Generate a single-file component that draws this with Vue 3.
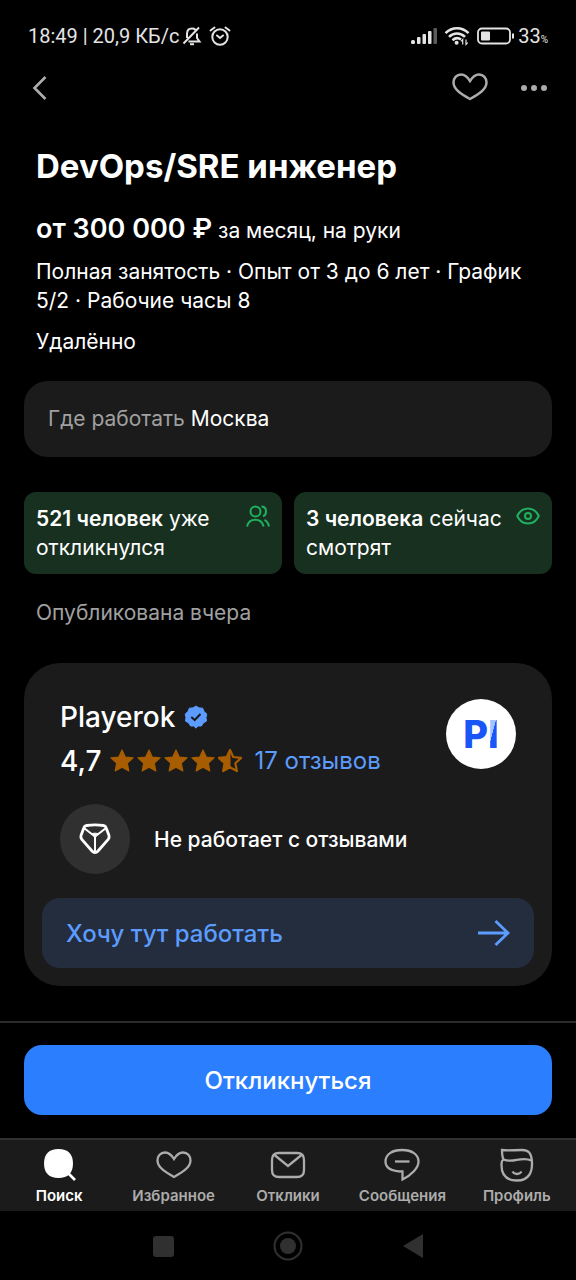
<script setup>
const heart =
  'M18 29C10 24.500 1.500 19.500 1.500 12.500C1.500 8 4.500 4.500 9 4.500C13 4.500 15.500 7 18 11C20.500 7 23 4.500 27 4.500C31.500 4.500 34.500 8 34.500 12.500C34.500 19.500 26 24.500 18 29Z'
const star =
  'M12 1.800L15 8.300L22.200 9.100L16.900 14L18.300 21.200L12 17.700L5.700 21.200L7.100 14L1.800 9.100L9 8.300Z'

const tabs = [
  { id: 'search', label: 'Поиск', active: true },
  { id: 'favorites', label: 'Избранное' },
  { id: 'responses', label: 'Отклики' },
  { id: 'messages', label: 'Сообщения' },
  { id: 'profile', label: 'Профиль' },
]
</script>

<template>
  <div class="app">
    <div class="status">
      <div class="status-group">
        <span class="clock">18:49 | 20,9 КБ/с</span>
        <svg class="bell" width="20" height="20" viewBox="0 0 20 20" fill="none" stroke="currentColor" stroke-width="2">
          <path d="M1.500 17.500L17 1.500M5 12V8C5 4.500 7 2.600 10 2.600C11.500 2.600 12.600 3 13.400 3.800M15 7.500V12L17.500 15.500H6.500" />
          <path d="M8 18.200H12" />
        </svg>
        <svg width="22" height="20" viewBox="0 0 22 20" fill="none" stroke="currentColor" stroke-width="2" stroke-linecap="round">
          <circle cx="11" cy="11" r="7.700" />
          <path d="M8 9.500L11 12L14 9.500M1.500 4.500L5.500 1.500M20.500 4.500L16.500 1.500" />
        </svg>
      </div>
      <div class="status-group">
        <svg width="26" height="18" viewBox="0 0 26 18" fill="currentColor">
          <rect x="0" y="13" width="4" height="4" rx="1.500" />
          <rect x="6" y="10" width="3.500" height="7" rx="1" />
          <rect x="11.500" y="7" width="3.500" height="10" rx="1" />
          <rect x="17" y="4" width="3.500" height="13" rx="1" />
          <rect x="22.500" y="1" width="3.500" height="16" rx="1" opacity=".4" />
        </svg>
        <svg width="26" height="20" viewBox="0 0 26 20" fill="none" stroke="currentColor" stroke-width="2.600">
          <path d="M1.500 7.200C8 .6 18 .6 24.500 7.200M5 10.900C9.700 6.400 16.300 6.400 21 10.900M8.500 14.300C11 12 14.500 11.800 17 13.500" />
          <circle cx="12.600" cy="16.700" r="2" fill="currentColor" stroke="none" />
          <path d="M18.700 18.500V13.500L17 15.300M22 13.500V18.500L23.700 16.700" stroke-width="1.200" />
        </svg>
        <svg width="38" height="18" viewBox="0 0 38 18" fill="none" stroke="currentColor">
          <rect x="1" y="1.500" width="32" height="15" rx="4" stroke-width="1.800" />
          <rect x="4" y="4.500" width="9" height="9" rx="1" fill="currentColor" stroke="none" />
          <path d="M36 6.500V11.500" stroke-width="2" />
        </svg>
        <span class="charge">33<small>%</small></span>
      </div>
    </div>

    <header class="toolbar">
      <button class="icon-btn" aria-label="Назад">
        <svg width="16" height="26" viewBox="0 0 16 26" fill="none" stroke="currentColor" stroke-width="2.600">
          <path d="M13.500 2L2.500 13L13.500 24" />
        </svg>
      </button>
      <div class="toolbar-actions">
        <button class="icon-btn" aria-label="В избранное">
          <svg width="36" height="32" viewBox="0 2 36 32" fill="none" stroke="currentColor" stroke-width="2.500">
            <path :d="heart" />
          </svg>
        </button>
        <button class="icon-btn" aria-label="Ещё">
          <svg width="28" height="8" viewBox="0 0 28 8" fill="currentColor">
            <circle cx="4" cy="4" r="3" />
            <circle cx="14" cy="4" r="3" />
            <circle cx="24" cy="4" r="3" />
          </svg>
        </button>
      </div>
    </header>

    <main class="content">
      <section class="summary">
        <h1>DevOps/SRE инженер</h1>
        <p class="salary"><strong>от 300 000 ₽</strong> за месяц, на руки</p>
        <p>Полная занятость · Опыт от 3 до 6 лет · График 5/2 · Рабочие часы 8</p>
        <p>Удалённо</p>
      </section>

      <section class="place"><span>Где работать</span> Москва</section>

      <section class="stats">
        <div class="stat">
          <p><strong>521 человек</strong> уже откликнулся</p>
          <svg width="24" height="24" viewBox="0 0 24 24" fill="none" stroke="currentColor" stroke-width="2">
            <circle cx="9.500" cy="7.500" r="5" />
            <path d="M1 22.500C2.200 17.800 5.200 15.800 9.300 15.800C13.400 15.800 16.400 17.800 17.600 22.500M15.500 2.500C18.600 2.600 20 4.700 20 7.500C20 9.800 19 11.600 17 12.300M18.500 15.800C21 17 22.300 19 23 22.500" />
          </svg>
        </div>
        <div class="stat">
          <p><strong>3 человека</strong> сейчас смотрят</p>
          <svg width="24" height="24" viewBox="0 0 24 24" fill="none" stroke="currentColor" stroke-width="2">
            <path d="M1.200 12C3.500 7.200 7.500 4.500 12 4.500S20.500 7.200 22.800 12C20.500 16.800 16.500 19.500 12 19.500S3.500 16.800 1.200 12Z" />
            <circle cx="12" cy="12" r="3" />
          </svg>
        </div>
      </section>

      <p class="published">Опубликована вчера</p>

      <section class="company">
        <div class="company-head">
          <div class="company-info">
            <div class="company-name">
              <h2>Playerok</h2>
              <svg width="24" height="24" viewBox="0 0 24 24">
                <path d="M12 1L15 2.900L18.700 3.200L20 6.600L22.800 9L22 12.500L22.500 16.100L19.300 17.900L17.400 21L13.800 21L12 23.200L9.800 21L6.600 21L4.700 17.900L1.500 16.100L2 12.500L1.200 9L4 6.600L5.300 3.200L9 2.900Z" fill="#5c9cff" stroke="#5c9cff" stroke-linejoin="round" />
                <path d="M7.300 12L10.700 15L16.500 9" fill="none" stroke="#1b1b1b" stroke-width="2" />
              </svg>
            </div>
            <div class="rating">
              <span>4,7</span>
              <div class="stars">
                <svg v-for="n in 4" :key="n" width="24" height="24" viewBox="1 1 22 22">
                  <path :d="star" />
                </svg>
                <svg width="24" height="24" viewBox="1 1 22 22">
                  <path :d="star" class="star-outline" />
                  <path d="M12 1.800V17.700L5.700 21.200L7.100 14L1.800 9.100L9 8.300Z" />
                </svg>
              </div>
              <a href="#reviews">17 отзывов</a>
            </div>
          </div>
          <div class="logo"><b>P</b><b class="logo-bar">I</b></div>
        </div>

        <div class="perk">
          <span class="perk-icon">
            <svg width="36" height="36" viewBox="0 0 36 36" fill="none" stroke="currentColor" stroke-width="2.800" stroke-linejoin="round">
              <path d="M7 6.500C7.500 5 8 4.700 9.500 4.500C15 3.600 21 3.600 26.500 4.500C28 4.700 28.500 5 29 6.500L32 14.500C32.400 16 32.200 17 31.200 18.300L21 30C19 32.200 17 32.200 15 30L4.800 18.300C3.800 17 3.600 16 4 14.500Z" />
              <path d="M7 7L16 14M29 7L20 14M18 16V31" stroke-width="2" />
              <path d="M14 12.800C17 12 19 12 22 12.800L19.500 15L18 17L16.500 15Z" fill="currentColor" stroke-width="1" />
            </svg>
          </span>
          <span>Не работает с отзывами</span>
        </div>

        <button class="want">
          <span>Хочу тут работать</span>
          <svg width="34" height="28" viewBox="0 0 34 28" fill="none" stroke="currentColor" stroke-width="2.800">
            <path d="M2 14H32M19.500 2L32 14L19.500 26" />
          </svg>
        </button>
      </section>
    </main>

    <div class="apply-bar">
      <button class="apply">Откликнуться</button>
    </div>

    <nav class="tabs">
      <a v-for="tab in tabs" :key="tab.id" :href="'#' + tab.id" class="tab" :class="{ active: tab.active }">
        <svg width="36" height="34" viewBox="0 0 36 34" fill="none" stroke="currentColor" stroke-width="2.300">
          <template v-if="tab.id === 'search'">
            <path d="M17.500 1C27 1 32 6 32 15.500C32 25 27 30 17.500 30S3 25 3 15.500S8 1 17.500 1Z" fill="currentColor" stroke="none" />
            <path d="M26.500 24.500L34 32" stroke-width="2.600" />
          </template>
          <path v-else-if="tab.id === 'favorites'" :d="heart" />
          <template v-else-if="tab.id === 'responses'">
            <path d="M9 5H27C32 5 34 7 34 12V22C34 27 32 29 27 29H9C4 29 2 27 2 22V12C2 7 4 5 9 5Z" />
            <path d="M4.500 7L18 18L31.500 7" />
          </template>
          <template v-else-if="tab.id === 'messages'">
            <path d="M18.500 23.500C7.500 23.300 1.500 20 1.500 13.500C1.500 6.500 8 2 18 2S34.500 6.500 34.500 13.500C34.500 20 27.500 27 18.500 31.500Z" />
            <path d="M11 13.500H25.500" />
          </template>
          <template v-else>
            <path d="M3 2C9 3 15 2 23 2C30 2 32 5.500 32.800 12C34 24 30 32.500 18 32.500C7 32.500 2.500 26 2.500 17C2.500 14 3.500 12 4.500 11.500C3.300 9 3 6 3 2Z" />
            <path d="M4.500 11.500C14 16 22 7.500 32.500 12.500M13.500 23.500C15.500 26.800 20.500 26.800 22.500 23.500" />
          </template>
        </svg>
        <span>{{ tab.label }}</span>
      </a>
    </nav>

    <div class="system-nav">
      <button aria-label="Недавние">
        <svg width="24" height="30" viewBox="0 0 24 30" fill="currentColor"><rect x="2" y="5" width="21" height="21" rx="3" /></svg>
      </button>
      <button aria-label="Домой">
        <svg width="30" height="30" viewBox="0 0 30 30"><circle cx="15" cy="15" r="13.500" fill="none" stroke="currentColor" stroke-width="2" /><circle cx="15" cy="15" r="8" fill="currentColor" /></svg>
      </button>
      <button aria-label="Назад к предыдущему экрану">
        <svg width="24" height="30" viewBox="0 0 24 30" fill="currentColor"><path d="M2 15L22 3V27Z" /></svg>
      </button>
    </div>
  </div>
</template>

<style>
body {
  margin: 0;
  background: #000;
}
</style>

<style scoped>
.app {
  display: flex;
  flex-direction: column;
  min-height: 100vh;
  background: #000;
  color: #fff;
  font-family: Inter, "Liberation Sans", sans-serif;
  font-size: 21px;
  line-height: 29px;
}
h1, h2, p {
  margin: 0;
}
strong {
  font-weight: 600;
}
svg {
  display: block;
  flex-shrink: 0;
}
button {
  border: 0;
  padding: 0;
  background: none;
  color: inherit;
  font: inherit;
  cursor: pointer;
}
a {
  color: inherit;
  text-decoration: none;
}
.status {
  display: flex;
  align-items: center;
  justify-content: space-between;
  height: 72px;
  padding: 0 28px;
  color: #e4e4e4;
  font-family: Roboto, sans-serif;
  font-size: 20px;
}
.status-group {
  display: flex;
  align-items: center;
  gap: 7px;
}
.bell {
  margin-left: -4px;
}
.charge {
  margin-left: -4px;
}
.charge small {
  font-size: 10px;
  line-height: 1;
}
.toolbar {
  display: flex;
  align-items: center;
  justify-content: space-between;
  height: 32px;
  padding: 0 28px 0 32px;
  color: #acacac;
}
.toolbar-actions {
  display: flex;
  align-items: center;
  gap: 32px;
}
.content {
  flex: 1;
  padding: 42px 24px 35px;
}
.summary {
  display: flex;
  flex-direction: column;
  padding: 0 12px;
  gap: 12px;
}
h1 {
  margin-bottom: 13px;
  font-size: 33px;
  line-height: 40px;
  font-weight: 700;
}
.salary {
  margin-bottom: -2px;
  line-height: 32px;
}
.salary strong {
  font-size: 27px;
  line-height: 36px;
}
.place {
  margin-top: 25px;
  padding: 24px;
  border-radius: 24px;
  background: #1b1b1b;
  line-height: 28px;
}
.place span {
  color: #a0a0a0;
}
.stats {
  display: grid;
  grid-template-columns: 1fr 1fr;
  gap: 12px;
  margin-top: 35px;
}
.stat {
  display: flex;
  justify-content: space-between;
  padding: 12px;
  border-radius: 12px;
  background: #18301f;
}
.stat svg {
  color: #1eb05f;
}
.published {
  margin-top: 24px;
  padding: 0 12px;
  color: #a0a0a0;
}
.company {
  margin-top: 36px;
  padding: 36px 18px 18px;
  border-radius: 36px;
  background: #1b1b1b;
}
.company-head {
  display: flex;
  justify-content: space-between;
  padding: 0 18px;
}
.company-info {
  display: flex;
  flex-direction: column;
  gap: 8px;
  line-height: 36px;
}
.company-name {
  display: flex;
  align-items: center;
  gap: 9px;
}
h2 {
  font-size: 28px;
  font-weight: 500;
}
.rating {
  display: flex;
  align-items: center;
  gap: 9px;
  font-size: 28px;
  font-weight: 500;
}
.rating a {
  margin-left: 3px;
  color: #5c9cff;
  font-size: 24px;
  font-weight: 400;
}
.stars {
  display: flex;
  gap: 3px;
  fill: #a85d00;
  stroke: #a85d00;
  stroke-linejoin: round;
}
.star-outline {
  fill: none;
  stroke-width: 2;
}
.logo {
  display: flex;
  align-items: center;
  justify-content: center;
  width: 70px;
  height: 70px;
  border-radius: 50%;
  background: #fff;
  color: #1a56f5;
  font-size: 38px;
}
.logo b {
  font-weight: 800;
}
.logo-bar {
  background: linear-gradient(105deg, #a3c4ff 42%, #1a56f5 43%);
  background-clip: text;
  color: transparent;
}
.perk {
  display: flex;
  align-items: center;
  gap: 24px;
  margin-top: 25px;
  padding: 0 18px;
  font-weight: 500;
}
.perk-icon {
  display: grid;
  place-items: center;
  width: 70px;
  height: 70px;
  border-radius: 50%;
  background: #303030;
}
.want {
  display: flex;
  align-items: center;
  justify-content: space-between;
  width: 100%;
  height: 70px;
  margin-top: 24px;
  padding: 0 24px;
  border-radius: 18px;
  background: #232d3e;
  color: #5c9cff;
  font-size: 24px;
  font-weight: 500;
}
.apply-bar {
  padding: 22px 24px 23px;
  border-top: 2px solid #2b2b2b;
}
.apply {
  width: 100%;
  height: 70px;
  border-radius: 18px;
  background: #2b7fff;
  font-size: 24px;
  font-weight: 500;
}
.tabs {
  display: grid;
  grid-template-columns: repeat(5, 1fr);
  padding: 8px 2px 5px;
  border-top: 2px solid #303030;
  background: #1b1b1b;
  color: #acacac;
  font-size: 15px;
  line-height: 20px;
  font-weight: 600;
}
.tab {
  display: flex;
  flex-direction: column;
  align-items: center;
  gap: 4px;
}
.tab.active {
  color: #fff;
}
.system-nav {
  display: flex;
  align-items: center;
  justify-content: center;
  gap: 98px;
  height: 70px;
  color: #303030;
}
</style>
